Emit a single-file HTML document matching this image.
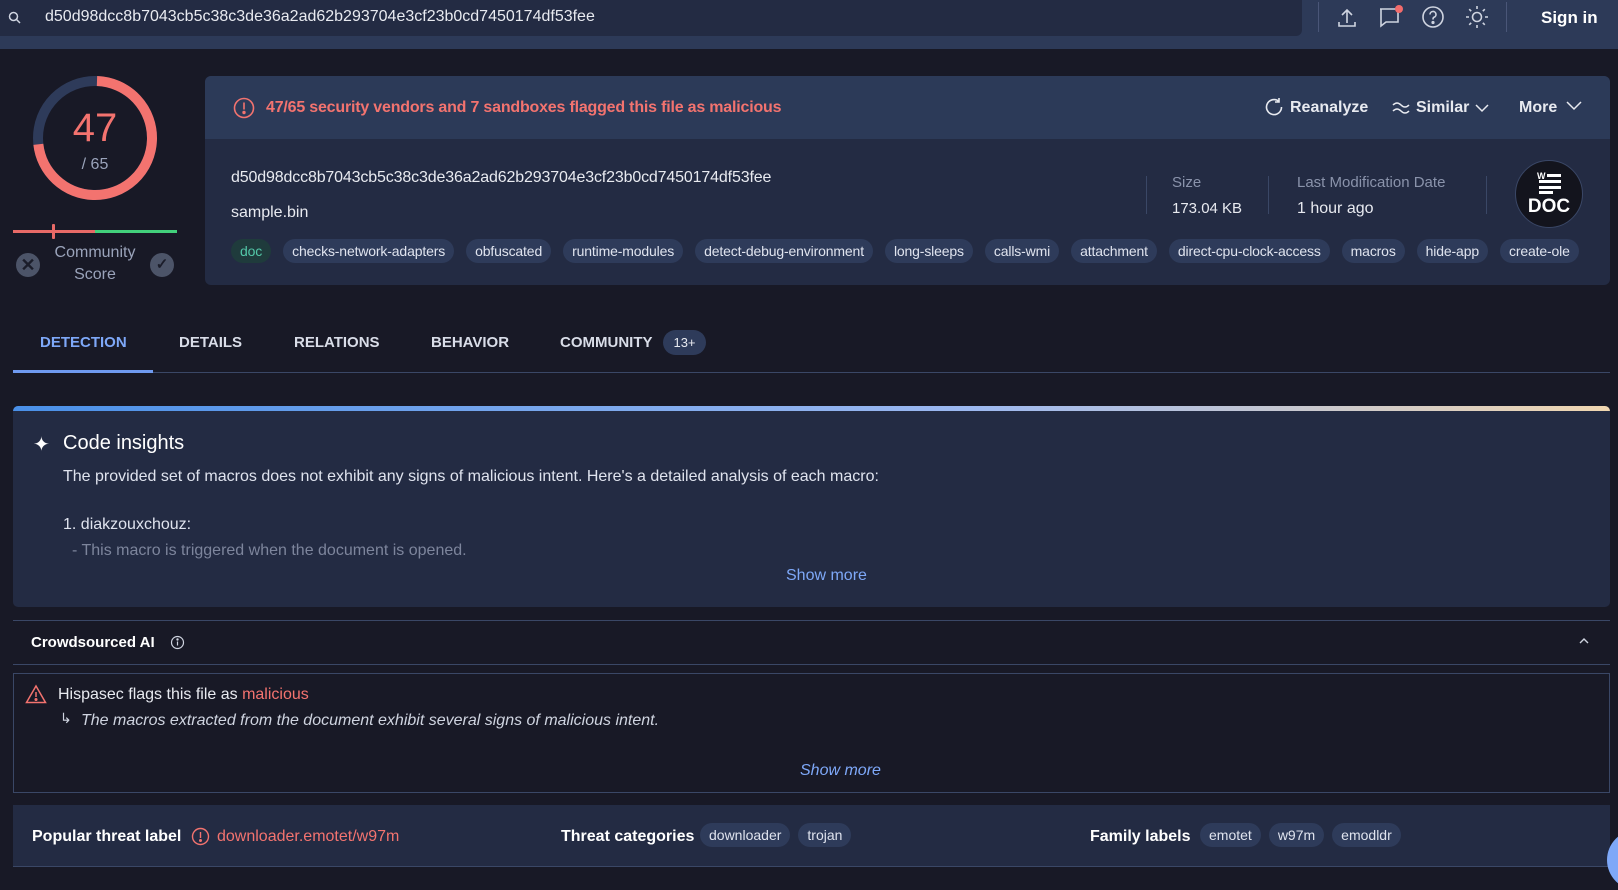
<!DOCTYPE html>
<html><head><meta charset="utf-8"><style>
*{margin:0;padding:0;box-sizing:border-box}
body{width:1618px;height:875px;background:#181926;font-family:"Liberation Sans",sans-serif;color:#e8eaf0;position:relative;overflow:hidden;font-size:15px}
.a{position:absolute;white-space:nowrap}
.tag{display:inline-block;height:24px;line-height:24px;padding:0 9px;border-radius:12px;background:#2e3b5a;color:#dfe3ee;font-size:14px;margin-right:12px;letter-spacing:-0.15px}
.chip{display:inline-block;height:24px;line-height:24px;padding:0 9px;border-radius:12px;background:#2e3b5a;color:#dfe3ee;font-size:14px;margin-left:8px}
</style></head><body>
<div class="a" style="left:0;top:0;width:1618px;height:49px;background:#2d3a58"></div>
<div class="a" style="left:0;top:0;width:1302px;height:36px;background:#232b43;border-radius:0 0 6px 0"></div>
<svg class="a" style="left:8px;top:11px" width="14" height="14"><circle cx="5.5" cy="5.5" r="4" fill="none" stroke="#cfd4e0" stroke-width="1.5"/><line x1="8.5" y1="8.5" x2="12" y2="12" stroke="#cfd4e0" stroke-width="1.5"/></svg>
<div class="a" style="left:45px;top:8px;font-size:16px">d50d98dcc8b7043cb5c38c3de36a2ad62b293704e3cf23b0cd7450174df53fee</div>
<div class="a" style="left:1318px;top:2px;width:1px;height:30px;background:#4a5678"></div>
<div class="a" style="left:1506px;top:2px;width:1px;height:30px;background:#4a5678"></div>
<svg class="a" style="left:1335px;top:6px" width="24" height="24" fill="none" stroke="#cfd4e0" stroke-width="1.6"><path d="M12 4v13M7 9l5-5 5 5M4 16v4h16v-4"/></svg>
<svg class="a" style="left:1377px;top:4px" width="28" height="26" fill="none" stroke="#cfd4e0" stroke-width="1.6"><path d="M3 5h18v13H9l-5 4V5z"/><circle cx="22" cy="5" r="4" fill="#f26b6b" stroke="none"/></svg>
<svg class="a" style="left:1421px;top:5px" width="24" height="24" fill="none" stroke="#cfd4e0" stroke-width="1.6"><circle cx="12" cy="12" r="10"/><path d="M9 9.5a3 3 0 1 1 4 2.8c-1 .4-1 1.2-1 2.2"/><circle cx="12" cy="17.5" r=".8" fill="#cfd4e0"/></svg>
<svg class="a" style="left:1465px;top:5px" width="24" height="24" fill="none" stroke="#cfd4e0" stroke-width="1.6"><circle cx="12" cy="12" r="4.5"/><path d="M12 1v3M12 20v3M1 12h3M20 12h3M4.2 4.2l2 2M17.8 17.8l2 2M4.2 19.8l2-2M17.8 6.2l2-2"/></svg>
<div class="a" style="left:1541px;top:8px;font-size:17px;font-weight:bold;color:#fff">Sign in</div>

<svg class="a" style="left:30px;top:73px" width="130" height="130"><circle cx="65" cy="65" r="57" fill="none" stroke="#2e3b5a" stroke-width="10"/><circle cx="65" cy="65" r="57" fill="none" stroke="#f3736f" stroke-width="10" stroke-dasharray="260 400" transform="rotate(-88 65 65)"/></svg>
<div class="a" style="left:0;top:106px;width:190px;text-align:center;font-size:40px;color:#f3736f">47</div>
<div class="a" style="left:0;top:156px;width:190px;text-align:center;font-size:16px;color:#9aa3ba">/ 65</div>
<div class="a" style="left:13px;top:230px;width:82px;height:3px;background:#e86a67"></div>
<div class="a" style="left:95px;top:230px;width:82px;height:3px;background:#42d07b"></div>
<div class="a" style="left:52px;top:224px;width:3px;height:15px;background:#e86a67;border-radius:1px"></div>
<div class="a" style="left:0;top:242px;width:190px;text-align:center;font-size:16px;color:#9aa3ba;line-height:22px">Community<br>Score</div>
<div class="a" style="left:16px;top:253px;width:24px;height:24px;border-radius:50%;background:#4c5468;color:#1b1d2a;text-align:center;line-height:24px;font-size:18px;font-weight:bold">✕</div>
<div class="a" style="left:150px;top:253px;width:24px;height:24px;border-radius:50%;background:#4c5468;color:#1b1d2a;text-align:center;line-height:24px;font-size:15px;font-weight:bold">✓</div>

<div class="a" style="left:205px;top:76px;width:1405px;height:209px;background:#232b43;border-radius:6px;overflow:hidden">
 <div style="height:63px;background:#2c3a58"></div>
</div>
<svg class="a" style="left:233px;top:97px" width="22" height="22" fill="none" stroke="#f3736f" stroke-width="1.6"><circle cx="11" cy="11" r="9.5"/><path d="M11 5.5v7"/><circle cx="11" cy="15.5" r=".9" fill="#f3736f"/></svg>
<div class="a" style="left:266px;top:99px;font-size:16px;font-weight:bold;color:#f3736f;letter-spacing:-0.2px">47/65 security vendors and 7 sandboxes flagged this file as malicious</div>
<svg class="a" style="left:1264px;top:97px" width="20" height="20" fill="none" stroke="#e8eaf0" stroke-width="1.6"><path d="M15 4.5A7.5 7.5 0 1 0 17.5 10M15 1v4h-4"/></svg>
<div class="a" style="left:1290px;top:99px;font-size:16px;font-weight:bold">Reanalyze</div>
<svg class="a" style="left:1392px;top:100px" width="18" height="14" fill="none" stroke="#e8eaf0" stroke-width="1.5"><path d="M1 5q4-4 8 0t8 0M1 11q4-4 8 0t8 0"/></svg>
<div class="a" style="left:1416px;top:99px;font-size:16px;font-weight:bold">Similar</div>
<svg class="a" style="left:1475px;top:103px" width="14" height="10" fill="none" stroke="#e8eaf0" stroke-width="1.5"><path d="M1 2l6 6 6-6"/></svg>
<div class="a" style="left:1519px;top:99px;font-size:16px;font-weight:bold">More</div>
<svg class="a" style="left:1566px;top:101px" width="16" height="10" fill="none" stroke="#e8eaf0" stroke-width="1.5"><path d="M1 1l7 7 7-7"/></svg>

<div class="a" style="left:231px;top:169px;font-size:16px;letter-spacing:-0.15px">d50d98dcc8b7043cb5c38c3de36a2ad62b293704e3cf23b0cd7450174df53fee</div>
<div class="a" style="left:231px;top:204px;font-size:16px">sample.bin</div>
<div class="a" style="left:1146px;top:176px;width:1px;height:38px;background:#3a4766"></div>
<div class="a" style="left:1268px;top:176px;width:1px;height:38px;background:#3a4766"></div>
<div class="a" style="left:1486px;top:176px;width:1px;height:38px;background:#3a4766"></div>
<div class="a" style="left:1172px;top:174px;font-size:15px;color:#8a93ab">Size</div>
<div class="a" style="left:1172px;top:200px;font-size:15px">173.04 KB</div>
<div class="a" style="left:1297px;top:174px;font-size:15px;color:#8a93ab">Last Modification Date</div>
<div class="a" style="left:1297px;top:200px;font-size:16px">1 hour ago</div>
<div class="a" style="left:1515px;top:160px;width:68px;height:68px;border-radius:50%;background:#13141d;border:1px solid #3a4766"></div>
<svg class="a" style="left:1535px;top:170px" width="30" height="24" fill="#fff"><text x="2" y="9" font-size="9" font-weight="bold" font-family="Liberation Sans">W</text><rect x="12" y="4" width="14" height="3"/><rect x="4" y="10" width="22" height="3"/><rect x="4" y="16" width="22" height="3"/><rect x="4" y="21" width="14" height="3"/></svg>
<div class="a" style="left:1515px;top:196px;width:68px;text-align:center;font-size:19px;font-weight:bold;color:#fff">DOC</div>

<div class="a" style="left:231px;top:239px"><span class="tag" style="background:#1f3b3c;color:#53c7a8">doc</span><span class="tag">checks-network-adapters</span><span class="tag">obfuscated</span><span class="tag">runtime-modules</span><span class="tag">detect-debug-environment</span><span class="tag">long-sleeps</span><span class="tag">calls-wmi</span><span class="tag">attachment</span><span class="tag">direct-cpu-clock-access</span><span class="tag">macros</span><span class="tag">hide-app</span><span class="tag">create-ole</span></div>

<div class="a" style="left:40px;top:334px;font-size:15px;font-weight:bold;color:#7ea8f8">DETECTION</div>
<div class="a" style="left:179px;top:334px;font-size:15px;font-weight:bold;color:#d9dde8">DETAILS</div>
<div class="a" style="left:294px;top:334px;font-size:15px;font-weight:bold;color:#d9dde8">RELATIONS</div>
<div class="a" style="left:431px;top:334px;font-size:15px;font-weight:bold;color:#d9dde8">BEHAVIOR</div>
<div class="a" style="left:560px;top:334px;font-size:15px;font-weight:bold;color:#d9dde8">COMMUNITY</div>
<div class="a" style="left:663px;top:330px;width:43px;height:25px;border-radius:13px;background:#2e3b5a;text-align:center;line-height:25px;font-size:13px">13+</div>
<div class="a" style="left:13px;top:372px;width:1597px;height:1px;background:#3a4766"></div>
<div class="a" style="left:13px;top:370px;width:140px;height:3px;background:#6f9af0"></div>

<div class="a" style="left:13px;top:406px;width:1597px;height:201px;background:#232b43;border-radius:5px;overflow:hidden"><div style="height:5px;background:linear-gradient(90deg,#4a90e8,#9cb8f0 60%,#f0d6b0)"></div></div>
<div class="a" style="left:33px;top:432px;font-size:20px;color:#fff">✦</div>
<div class="a" style="left:63px;top:432px;font-size:20px;color:#fff">Code insights</div>
<div class="a" style="left:63px;top:468px;font-size:16px;color:#dfe3ee">The provided set of macros does not exhibit any signs of malicious intent. Here's a detailed analysis of each macro:</div>
<div class="a" style="left:63px;top:516px;font-size:16px;color:#dfe3ee">1. diakzouxchouz:</div>
<div class="a" style="left:72px;top:542px;font-size:16px;color:#7d859c">- This macro is triggered when the document is opened.</div>
<div class="a" style="left:786px;top:567px;font-size:16px;color:#7ea8f8">Show more</div>

<div class="a" style="left:13px;top:620px;width:1597px;height:1px;background:#3a4766"></div>
<div class="a" style="left:31px;top:634px;font-size:15px;font-weight:bold;color:#fff">Crowdsourced AI</div>
<svg class="a" style="left:170px;top:635px" width="15" height="15" fill="none" stroke="#cfd4e0" stroke-width="1.2"><circle cx="7.5" cy="7.5" r="6"/><path d="M7.5 6.5v4"/><circle cx="7.5" cy="4.5" r=".6" fill="#cfd4e0"/></svg>
<svg class="a" style="left:1578px;top:637px" width="12" height="8" fill="none" stroke="#cfd4e0" stroke-width="1.4"><path d="M2 6l4-4 4 4"/></svg>
<div class="a" style="left:13px;top:664px;width:1597px;height:1px;background:#3a4766"></div>
<div class="a" style="left:13px;top:673px;width:1597px;height:120px;border:1px solid #3a4766"></div>
<svg class="a" style="left:25px;top:684px" width="22" height="20" fill="none" stroke="#f3736f" stroke-width="1.5"><path d="M11 2L1.5 18.5h19z"/><path d="M11 8v5"/><circle cx="11" cy="15.5" r=".8" fill="#f3736f"/></svg>
<div class="a" style="left:58px;top:686px;font-size:16px">Hispasec flags this file as <span style="color:#f3736f">malicious</span></div>
<div class="a" style="left:60px;top:710px;font-size:14px;color:#cfd4e0">↳</div>
<div class="a" style="left:81px;top:712px;font-size:16px;font-style:italic;color:#cfd4e0">The macros extracted from the document exhibit several signs of malicious intent.</div>
<div class="a" style="left:800px;top:762px;font-size:16px;font-style:italic;color:#7ea8f8">Show more</div>

<div class="a" style="left:13px;top:805px;width:1597px;height:62px;background:#232b43;border-bottom:1px solid #3a4766"></div>
<div class="a" style="left:32px;top:828px;font-size:16px;font-weight:bold;color:#fff">Popular threat label</div>
<svg class="a" style="left:191px;top:827px" width="19" height="19" fill="none" stroke="#f3736f" stroke-width="1.4"><circle cx="9.5" cy="9.5" r="8"/><path d="M9.5 5v6"/><circle cx="9.5" cy="13.5" r=".8" fill="#f3736f"/></svg>
<div class="a" style="left:217px;top:828px;font-size:16px;color:#f3736f">downloader.emotet/w97m</div>
<div class="a" style="left:561px;top:828px;font-size:16px;font-weight:bold;color:#fff">Threat categories</div>
<div class="a" style="left:692px;top:823px"><span class="chip">downloader</span><span class="chip">trojan</span></div>
<div class="a" style="left:1090px;top:828px;font-size:16px;font-weight:bold;color:#fff">Family labels</div>
<div class="a" style="left:1192px;top:823px"><span class="chip">emotet</span><span class="chip">w97m</span><span class="chip">emodldr</span></div>
<div class="a" style="left:1607px;top:830px;width:60px;height:60px;border-radius:50%;background:#7ea8f8"></div>
</body></html>
